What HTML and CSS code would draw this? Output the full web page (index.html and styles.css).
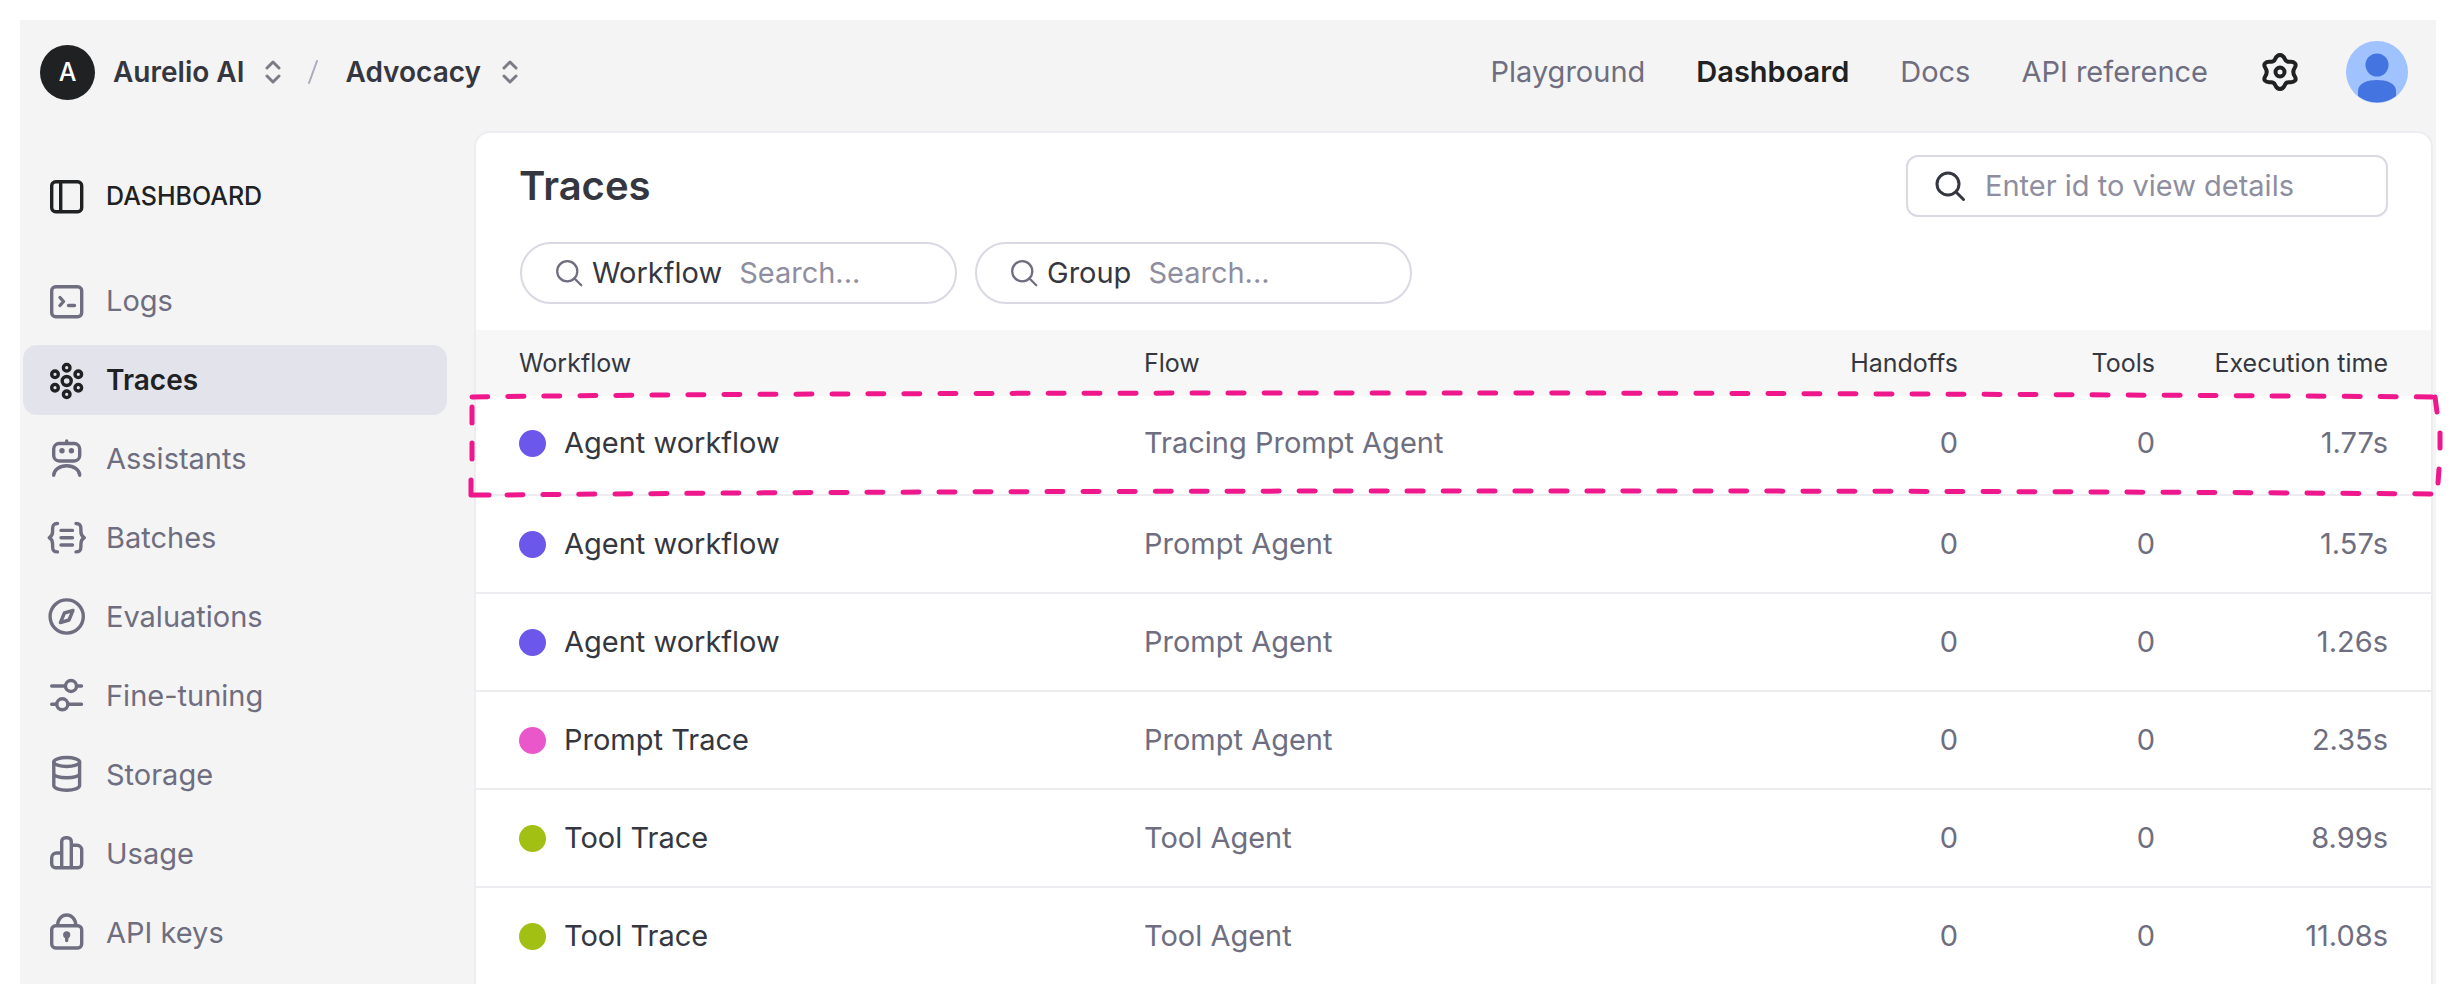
FILE: index.html
```html
<!DOCTYPE html>
<html lang="en">
<head>
<meta charset="utf-8">
<title>Traces</title>
<link rel="stylesheet" href="styles.css">
</head>
<body>
<div class="app">
  <header class="topbar">
    <div class="crumbs">
      <span class="org-badge" aria-hidden="true">A</span>
      <button class="crumb" type="button">Aurelio AI
        <svg class="caret" viewBox="0 0 16 24"><path d="M2 8l6-6 6 6M2 16l6 6 6-6"/></svg>
      </button>
      <svg class="slash" viewBox="0 0 10 24" aria-hidden="true"><path d="M9 1L1 23"/></svg>
      <button class="crumb" type="button">Advocacy
        <svg class="caret" viewBox="0 0 16 24"><path d="M2 8l6-6 6 6M2 16l6 6 6-6"/></svg>
      </button>
    </div>
    <nav class="topnav" aria-label="Main">
      <a href="#">Playground</a>
      <a href="#" class="current" aria-current="page">Dashboard</a>
      <a href="#">Docs</a>
      <a href="#">API reference</a>
    </nav>
    <button class="icon-button gear" type="button" aria-label="Settings">
      <svg viewBox="0 0 40 40"><path d="M20 3C23 3 24 5 25 7.300C26 9.600 27.300 10 29.500 9.800C34.500 9.300 37.200 12 34.600 16C33 18.500 33 21.500 34.600 24C37.200 28 34.500 30.700 29.500 30.200C27.300 30 26 30.400 25 32.700C24 35 23 37 20 37C17 37 16 35 15 32.700C14 30.400 12.700 30 10.500 30.200C5.500 30.700 2.800 28 5.400 24C7 21.500 7 18.500 5.400 16C2.800 12 5.500 9.300 10.500 9.800C12.700 10 14 9.600 15 7.300C16 5 17 3 20 3Z"/><circle cx="20" cy="20" r="4.500"/></svg>
    </button>
    <button class="icon-button avatar" type="button" aria-label="Account">
      <svg viewBox="0 0 62 62"><circle cx="31" cy="31" r="31" fill="#a0c2ff"/><circle cx="31" cy="24" r="11.500" fill="#4374e0"/><path d="M12 55V50c0-8 10-11 19-11s19 3 19 11v5a31 31 0 0 1-38 0z" fill="#4374e0"/></svg>
    </button>
  </header>

  <div class="body">
    <aside class="sidebar">
      <div class="side-title">
        <svg class="icon" viewBox="0 0 40 40"><rect x="4.700" y="5.700" width="30" height="30" rx="4"/><path d="M13.700 6v29"/></svg>
        DASHBOARD
      </div>
      <nav class="side-nav" aria-label="Dashboard">
        <a href="#"><svg class="icon" viewBox="0 0 40 40"><rect x="4.700" y="5.700" width="30" height="30" rx="4"/><path d="M13 16.500l3.500 4-3.500 4M21.500 24.500h6"/></svg>Logs</a>
        <a href="#" class="current" aria-current="page"><svg class="icon" viewBox="0 0 40 40"><circle cx="19.700" cy="21" r="4.500"/><circle cx="19.700" cy="7.700" r="3.300"/><circle cx="8" cy="14.300" r="3.300"/><circle cx="31.300" cy="14.300" r="3.300"/><circle cx="8" cy="27.700" r="3.300"/><circle cx="31.300" cy="27.700" r="3.300"/><circle cx="19.700" cy="34.300" r="3.300"/></svg>Traces</a>
        <a href="#"><svg class="icon" viewBox="0 0 40 40"><rect x="6.700" y="4.500" width="26" height="17.500" rx="5.500"/><path d="M19.700 2v2M6.700 36.300c0-5 5.500-9.500 13-9.500s13 4.500 13 9.500"/><circle class="solid" cx="15" cy="11.700" r="2.700"/><circle class="solid" cx="24.400" cy="11.700" r="2.700"/></svg>Assistants</a>
        <a href="#"><svg class="icon" viewBox="0 0 40 40"><path d="M10.500 5.500C6.500 5.500 5.600 7.500 5.600 11v2.500c0 3-.6 4.700-3.300 6.200 2.700 1.500 3.300 3.200 3.300 6.200v2.500c0 3.500.9 5.500 4.900 5.500M29 5.500c4 0 4.900 2 4.900 5.500v2.500c0 3 .6 4.700 3.300 6.200-2.700 1.500-3.300 3.200-3.300 6.200v2.500c0 3.500-.9 5.500-4.900 5.500M14 12.400h11.500M14 19.700h11.500M14 27h11.500"/></svg>Batches</a>
        <a href="#"><svg class="icon" viewBox="0 0 40 40"><circle cx="19.700" cy="19.500" r="16.600"/><path d="M26 13.400l-8.600 2.600-4 9.600 8.600-2.600z"/></svg>Evaluations</a>
        <a href="#"><svg class="icon" viewBox="0 0 40 40"><path d="M4.700 10H18M30 10h4.500M4.700 28.300H9M21 28.300h13.500"/><circle cx="24" cy="10" r="5.500"/><circle cx="15.300" cy="28.300" r="5.500"/></svg>Fine-tuning</a>
        <a href="#"><svg class="icon" viewBox="0 0 40 40"><ellipse cx="19.700" cy="7" rx="12.900" ry="4.500"/><path d="M6.800 7v23.500c0 2.700 5.800 4.800 12.900 4.800s12.900-2.100 12.900-4.800V7M6.800 18.500c0 2.500 5.800 4.300 12.900 4.300s12.900-1.800 12.900-4.300"/></svg>Storage</a>
        <a href="#"><svg class="icon" viewBox="0 0 40 40"><path d="M14.700 33.700V7.500a3.800 3.800 0 0 1 3.800-3.800h2a3.800 3.800 0 0 1 3.800 3.800v26.200M14.700 19H9.500a4.800 4.800 0 0 0-4.800 4.800v6.200a3.700 3.700 0 0 0 3.700 3.700H31a3.700 3.700 0 0 0 3.700-3.700V16a4.700 4.700 0 0 0-4.700-4.700h-5.500"/></svg>Usage</a>
        <a href="#"><svg class="icon" viewBox="0 0 40 40"><rect x="4.700" y="12.700" width="30" height="22.300" rx="4"/><path d="M10.700 12a9 10 0 0 1 18 0M19.700 22v5.500"/><circle class="solid" cx="19.700" cy="21.800" r="3.600"/></svg>API keys</a>
      </nav>
    </aside>

    <main class="card">
      <div class="card-head">
        <h1>Traces</h1>
        <label class="field id-field">
          <svg class="icon-search" viewBox="0 0 32 32"><circle cx="14" cy="14" r="11"/><path d="M22 22l7.500 7.500"/></svg>
          <input type="text" aria-label="Enter id to view details" placeholder="Enter id to view details">
        </label>
      </div>
      <div class="filters">
        <label class="field pill">
          <svg class="icon-search" viewBox="0 0 32 32"><circle cx="14" cy="14" r="11.500"/><path d="M22 22l8 8"/></svg>
          <span>Workflow</span>
          <input type="text" placeholder="Search...">
        </label>
        <label class="field pill">
          <svg class="icon-search" viewBox="0 0 32 32"><circle cx="14" cy="14" r="11.500"/><path d="M22 22l8 8"/></svg>
          <span>Group</span>
          <input type="text" placeholder="Search...">
        </label>
      </div>
      <table class="traces">
        <colgroup><col class="c-name"><col class="c-flow"><col class="c-hand"><col class="c-tools"><col class="c-time"></colgroup>
        <thead>
          <tr><th scope="col">Workflow</th><th scope="col">Flow</th><th scope="col" class="num">Handoffs</th><th scope="col" class="num">Tools</th><th scope="col" class="num">Execution time</th></tr>
        </thead>
        <tbody>
          <tr class="marked">
            <td><span class="name"><i class="dot violet"></i>Agent workflow</span>
              <svg class="marker" viewBox="0 0 1975 108" preserveAspectRatio="none" aria-hidden="true">
                <path class="dashes" d="M6 5C300 1 700 1 1000 1S1700 3 1969 5"/>
                <path class="dashes" d="M6 15v52"/>
                <path class="dashes" d="M41 103C300 100 700 99 1000 99S1600 99 1972 102"/>
                <path d="M5 88v15h18M1969 5l2 15M1974 41v15M1973 77l-1 14"/>
              </svg></td>
            <td>Tracing Prompt Agent</td><td class="num">0</td><td class="num">0</td><td class="num">1.77s</td>
          </tr>
          <tr><td><span class="name"><i class="dot violet"></i>Agent workflow</span></td><td>Prompt Agent</td><td class="num">0</td><td class="num">0</td><td class="num">1.57s</td></tr>
          <tr><td><span class="name"><i class="dot violet"></i>Agent workflow</span></td><td>Prompt Agent</td><td class="num">0</td><td class="num">0</td><td class="num">1.26s</td></tr>
          <tr><td><span class="name"><i class="dot pink"></i>Prompt Trace</span></td><td>Prompt Agent</td><td class="num">0</td><td class="num">0</td><td class="num">2.35s</td></tr>
          <tr><td><span class="name"><i class="dot green"></i>Tool Trace</span></td><td>Tool Agent</td><td class="num">0</td><td class="num">0</td><td class="num">8.99s</td></tr>
          <tr><td><span class="name"><i class="dot green"></i>Tool Trace</span></td><td>Tool Agent</td><td class="num">0</td><td class="num">0</td><td class="num">11.08s</td></tr>
        </tbody>
      </table>
    </main>
  </div>
</div>
</body>
</html>
```
FILE: styles.css
```css
:root {
  --ink: #353740;
  --strong: #202123;
  --muted: #6e6e80;
  --placeholder: #8e8ea0;
  --line: #ececf1;
  --field-line: #d9d9e3;
  --canvas: #f4f4f4;
}

* { box-sizing: border-box; }

body {
  margin: 0;
  padding: 20px;
  min-height: 100vh;
  background: #fff;
  color: var(--ink);
  font: 400 29px/40px Inter, "Liberation Sans", sans-serif;
}

a { color: inherit; text-decoration: none; }
button { border: 0; padding: 0; background: none; color: inherit; font: inherit; cursor: pointer; }
svg { display: block; fill: none; stroke: currentColor; stroke-linecap: round; stroke-linejoin: round; }

.app { background: var(--canvas); }

/* Top bar */
.topbar { display: flex; align-items: center; height: 104px; margin-bottom: 7px; padding: 0 28px 0 20px; }
.crumbs { display: flex; align-items: center; }
.org-badge {
  display: grid; place-items: center;
  width: 55px; height: 55px; margin-right: 18px;
  border-radius: 50%; background: var(--strong); color: #fff;
  font-size: 25px; font-weight: 500;
}
.crumb { display: flex; align-items: center; gap: 21px; font-size: 28px; font-weight: 600; }
.caret { width: 16px; height: 24px; stroke-width: 3; color: #7c7c86; }
.slash { width: 10px; height: 24px; margin: 0 27px; stroke-width: 2; color: #acacbe; }

.topnav { display: flex; gap: 51px; margin-left: auto; color: var(--muted); }
.topnav .current { color: var(--strong); font-weight: 600; }
.gear { margin-left: 52px; color: var(--strong); }
.gear svg { width: 40px; height: 40px; stroke-width: 4; }
.avatar { margin-left: 46px; }
.avatar svg { width: 62px; height: 62px; stroke: none; }

/* Sidebar */
.body { display: flex; }
.sidebar { flex: 0 0 454px; padding: 30px 27px 0 3px; }
.icon { flex: none; width: 40px; height: 40px; stroke-width: 3.4; }
.icon .solid { fill: currentColor; stroke: none; }
.side-title, .side-nav a { display: flex; align-items: center; gap: 19px; height: 70px; padding: 0 24px; }
.side-title { margin-bottom: 35px; color: var(--strong); font-size: 25px; font-weight: 500; }
.side-nav { display: flex; flex-direction: column; gap: 9px; color: var(--muted); }
.side-nav a { border-radius: 14px; }
.side-nav .current { background: #e3e3eb; color: var(--strong); font-size: 28px; font-weight: 600; }

/* Card */
.card {
  flex: 1; min-width: 0; margin-right: 3px;
  border: 2px solid var(--line); border-bottom: 0;
  border-radius: 16px 16px 0 0; background: #fff;
}
.card-head { display: flex; align-items: center; justify-content: space-between; padding: 22px 43px 0; }
h1 { margin: 0; font-size: 40px; line-height: 62px; font-weight: 600; }
.field { display: flex; align-items: center; height: 62px; border: 2px solid var(--field-line); cursor: text; }
.field input { flex: 1; min-width: 0; border: 0; padding: 0; outline: 0; background: none; color: inherit; font: inherit; }
.field input::placeholder { color: var(--placeholder); opacity: 1; }
.id-field { width: 482px; padding: 0 26px; gap: 19px; border-radius: 12px; }
.id-field .icon-search { width: 32px; height: 32px; stroke-width: 3; }
.filters { display: flex; gap: 18px; padding: 25px 44px 26px; }
.pill { width: 437px; padding: 0 33px; border-radius: 31px; }
.pill .icon-search { width: 28px; height: 28px; margin-right: 9px; stroke-width: 2.6; color: var(--muted); }
.pill span { margin-right: 17px; }

/* Table */
.traces { width: 100%; border-collapse: separate; border-spacing: 0; table-layout: fixed; }
.c-name { width: 668px; }
.c-hand { width: 190px; }
.c-tools { width: 197px; }
.c-time { width: 276px; }
th { height: 66px; padding: 0; background: #f7f7f8; font-size: 25px; font-weight: 400; text-align: left; }
td { height: 98px; padding: 0; border-bottom: 2px solid var(--line); color: var(--muted); }
th:first-child, td:first-child { padding-left: 43px; color: var(--ink); }
th:last-child, td:last-child { padding-right: 43px; }
.num { text-align: right; }
tbody tr:last-child td { height: 96px; border-bottom: 0; }
.name { display: flex; align-items: center; gap: 18px; }
.dot { width: 27px; height: 27px; border-radius: 50%; }
.violet { background: #6b57ea; }
.pink { background: #ea57cb; }
.green { background: #a2bf14; }

/* Hand-drawn highlight around a row */
.marked { position: relative; }
.marked td { height: 100px; padding-bottom: 4px; }
.marker {
  position: absolute; left: -10px; top: -4px;
  width: calc(100% + 20px); height: 108px;
  overflow: visible; pointer-events: none;
  color: #ee178c; stroke-width: 5;
}
.dashes { stroke-dasharray: 16 20; }
```
